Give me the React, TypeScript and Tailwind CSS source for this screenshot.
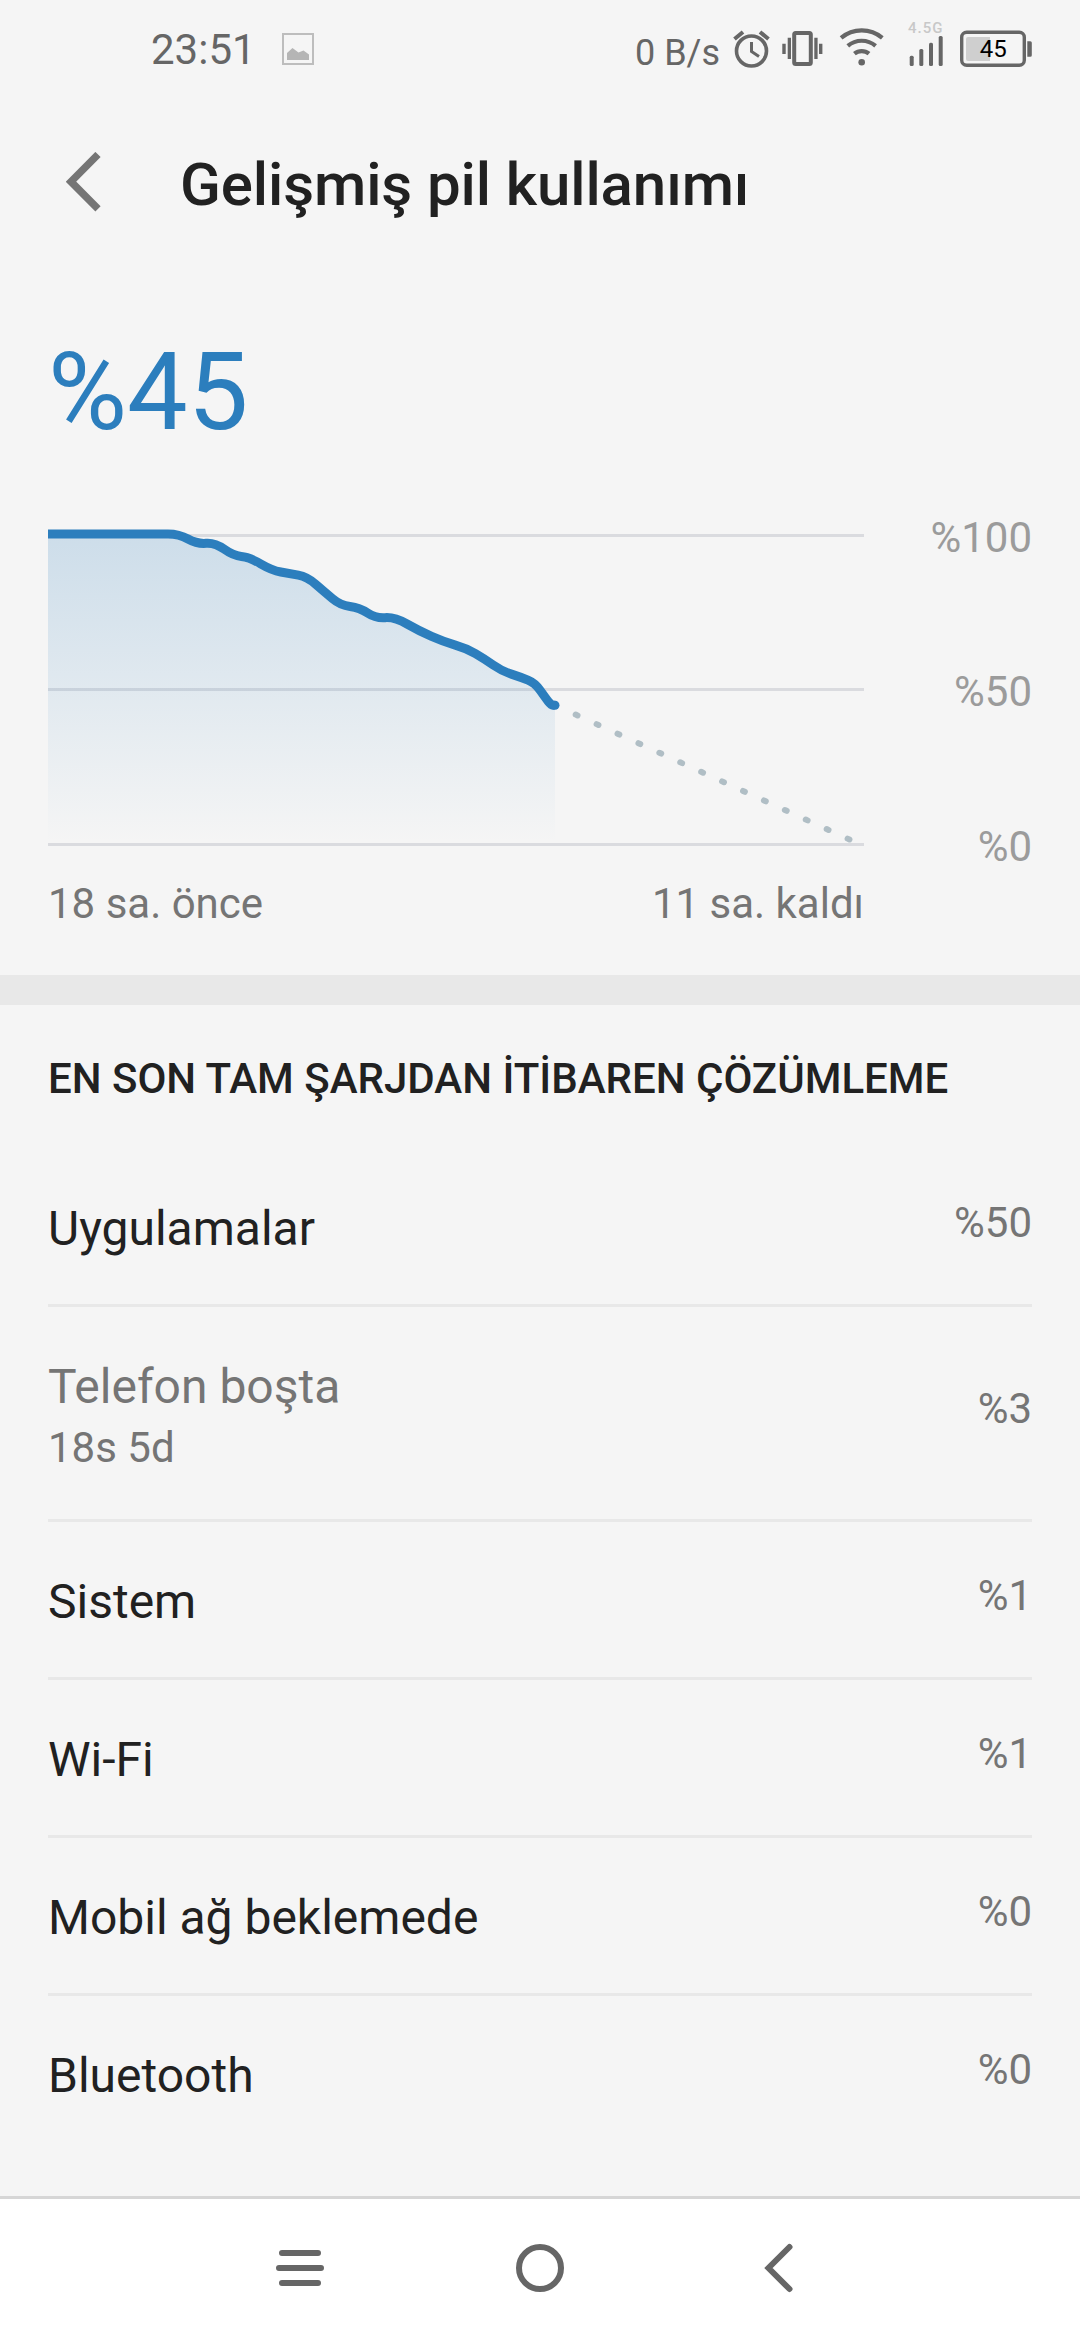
import type { ReactNode } from "react";

type Point = [number, number];

// Battery level history in chart pixels, the curve rounds off every corner
const history: Point[] = [
  [0, 14],
  [131, 14],
  [149, 24],
  [167, 22.6],
  [185.4, 35.8],
  [201.2, 37.2],
  [224, 50.4],
  [241.6, 53.6],
  [259, 56.7],
  [276.6, 71.9],
  [292.4, 85.3],
  [311.7, 87.7],
  [327.5, 98.3],
  [346.8, 97],
  [371.3, 111],
  [395.9, 121.8],
  [418.7, 128.5],
  [436.2, 138.7],
  [453.8, 151],
  [473, 157.3],
  [487, 163],
  [497.6, 178],
  [503, 185],
  [507, 185.3],
];

const rows = [
  { label: "Uygulamalar", value: "%50" },
  { label: "Telefon boşta", detail: "18s 5d", value: "%3" },
  { label: "Sistem", value: "%1" },
  { label: "Wi-Fi", value: "%1" },
  { label: "Mobil ağ beklemede", value: "%0" },
  { label: "Bluetooth", value: "%0" },
];

function smoothPath(points: Point[]) {
  const last = points[points.length - 1];
  let d = `M${points[0][0]} ${points[0][1]} H120`;
  for (let i = 1; i < points.length - 1; i++) {
    const [x, y] = points[i];
    const [nx, ny] = points[i + 1];
    d += ` Q${x} ${y} ${(x + nx) / 2} ${(y + ny) / 2}`;
  }
  return `${d} L${last[0]} ${last[1]}`;
}

function StatusBar() {
  return (
    <div className="flex h-[102px] shrink-0 items-start pl-[151px] text-[#666666]">
      <span className="w-[131px] pt-[26px] text-[42px] leading-[48px]">23:51</span>
      <svg className="mt-[33px]" width="32" height="32" viewBox="0 0 32 32">
        <rect x="1" y="1" width="30" height="30" fill="none" stroke="#bdbdbd" strokeWidth="2" />
        <path d="M5 27V20l5.500-5 6 4.500 5-2 5.500 4v5.500z" fill="#b5b5b5" />
      </svg>
      <span className="ml-auto pt-[32px] text-[36px] leading-[42px]">0 B/s</span>
      <svg className="ml-2.5 shrink-0" width="350" height="80" viewBox="730 0 350 80" fill="none">
        {/* alarm */}
        <g stroke="#666666" strokeWidth="3.600">
          <circle cx="751.500" cy="51" r="15" />
          <path d="M751.500 42v9.500l7.500 5" strokeWidth="3" />
          <path d="M734.500 39l8.500-7M768.500 39l-8.500-7" strokeWidth="4" />
        </g>
        {/* vibrate */}
        <rect x="794.200" y="33" width="16.600" height="31" rx="1.500" stroke="#666666" strokeWidth="4" />
        <path
          d="M787.700 37.700h3.300v21.300h-3.300zM782.300 43.700h3.400v10.300h-3.400zM814.300 37.700h3.300v21.300h-3.300zM819 43.700h3.400v10.300h-3.400z"
          fill="#666666"
        />
        {/* wifi */}
        <g stroke="#666666" strokeWidth="4.200">
          <path d="M841.100 37.800a32 32 0 0 1 41.200 0" />
          <path d="M847.800 45.800a21.600 21.600 0 0 1 27.800 0" />
          <path d="M854.400 53.700a11.300 11.300 0 0 1 14.600 0" />
        </g>
        <circle cx="861.700" cy="62.300" r="3.300" fill="#666666" />
        {/* mobile signal */}
        <text x="908" y="33" fontSize="15" fontWeight="500" letterSpacing="1" fill="#c8c8c8">
          4.5G
        </text>
        <g fill="#666666">
          <rect x="909.700" y="55.700" width="4" height="10.300" rx="1.500" />
          <rect x="919.300" y="49" width="4" height="17" rx="1.500" />
          <rect x="929" y="42.700" width="4" height="23.300" rx="1.500" />
          <rect x="938.700" y="36" width="4" height="30" rx="1.500" />
        </g>
        {/* battery */}
        <rect x="961.700" y="32.300" width="62.600" height="33" rx="5" stroke="#666666" strokeWidth="3.400" />
        <path d="M990 37h-22a2 2 0 0 0-2 2v20a2 2 0 0 0 2 2h22z" fill="#cfcfcf" />
        <path d="M1027.300 41.300h3a1.500 1.500 0 0 1 1.500 1.500v12.500a1.500 1.500 0 0 1-1.500 1.500h-3z" fill="#666666" />
        <text x="993.300" y="57" fontSize="24" textAnchor="middle" fill="#000000">
          45
        </text>
      </svg>
    </div>
  );
}

function Header() {
  return (
    <header className="flex h-[160px] shrink-0 items-start pl-[66px]">
      <svg className="mt-[50px] shrink-0" width="35" height="60" viewBox="0 0 35 60" fill="none">
        <path d="M32 2.500L5 29.700 32 56.800" stroke="#757575" strokeWidth="7.400" />
      </svg>
      <h1 className="ml-[79px] pt-[47px] text-[60px] font-medium leading-[72px] tracking-[-0.1px] text-[#212121]">
        Gelişmiş pil kullanımı
      </h1>
    </header>
  );
}

function Chart() {
  const line = smoothPath(history);
  return (
    <div className="flex h-[346px] justify-between">
      <svg width="820" height="346" viewBox="0 0 820 346" fill="none">
        <defs>
          <linearGradient id="level" x1="0" y1="14" x2="0" y2="323" gradientUnits="userSpaceOnUse">
            <stop offset="0" stopColor="#2c7ebd" stopOpacity="0.200" />
            <stop offset="0.500" stopColor="#2c7ebd" stopOpacity="0.100" />
            <stop offset="1" stopColor="#2c7ebd" stopOpacity="0" />
          </linearGradient>
        </defs>
        <path d="M0 14h816v3H0zM0 168h816v3H0zM0 323h816v3H0z" fill="#dadbdf" />
        <path d={`${line} V323 H0 Z`} fill="url(#level)" />
        <path d={line} stroke="#2c7ebd" strokeWidth="9" strokeLinejoin="round" />
        <circle cx="507" cy="185.300" r="4.500" fill="#2c7ebd" />
        <path
          d="M527.700 194.600L801.500 319.500"
          stroke="#b0bec5"
          strokeWidth="6"
          strokeLinecap="round"
          strokeDasharray="2 20.990"
        />
      </svg>
      <div className="-mt-1.5 flex flex-col items-end text-[42px] leading-[48px] text-[#9b9b9b]">
        <span className="h-[154px] shrink-0">%100</span>
        <span className="h-[155px] shrink-0">%50</span>
        <span className="shrink-0">%0</span>
      </div>
    </div>
  );
}

function Row({ label, detail, value, last }: { label: string; detail?: string; value: string; last: boolean }) {
  return (
    <li
      className={
        "flex items-start justify-between " +
        (detail ? "h-[215px] " : "h-[158px] ") +
        (last ? "" : "border-b-[3px] border-[#e8e8e8]")
      }
    >
      <div className={detail ? "pt-[52px] text-[#757575]" : "pt-[52px] text-[#212121]"}>
        <p className="text-[48px] leading-[56px]">{label}</p>
        {detail && <p className="pt-[9px] text-[42px] leading-[48px]">{detail}</p>}
      </div>
      <span className={(detail ? "pt-[78px] " : "pt-[50px] ") + "text-[42px] leading-[48px] text-[#757575]"}>
        {value}
      </span>
    </li>
  );
}

function NavButton({ children }: { children: ReactNode }) {
  return (
    <button className="flex h-[60px] w-[60px] items-center justify-center">
      <svg width="60" height="60" viewBox="0 0 60 60" fill="none" stroke="#666666" strokeWidth="6" strokeLinecap="round">
        {children}
      </svg>
    </button>
  );
}

export default function App() {
  return (
    <div className="flex h-[2340px] w-[1080px] flex-col overflow-hidden bg-[#f5f5f5] font-['Roboto',sans-serif]">
      <StatusBar />
      <Header />
      <section className="flex h-[713px] shrink-0 flex-col px-12">
        <p className="h-[258px] pt-[67px] text-[108px] leading-[126px] text-[#2c7ebd]">%45</p>
        <Chart />
        <div className="mt-[14px] flex w-[816px] justify-between text-[42px] leading-[48px] text-[#757575]">
          <span>18 sa. önce</span>
          <span>11 sa. kaldı</span>
        </div>
      </section>
      <div className="h-[30px] shrink-0 bg-[#e8e8e8]" />
      <section className="grow px-12">
        <h2 className="h-[144px] pt-[50px] text-[42px] font-medium leading-[48px] text-[#212121]">
          EN SON TAM ŞARJDAN İTİBAREN ÇÖZÜMLEME
        </h2>
        <ul>
          {rows.map((row, i) => (
            <Row key={row.label} {...row} last={i === rows.length - 1} />
          ))}
        </ul>
      </section>
      <nav className="flex h-[144px] shrink-0 items-start justify-center gap-[180px] border-t-[3px] border-[#d6d6d6] bg-white pt-[39px]">
        <NavButton>
          <path d="M12 15h36M9 30h42M12 45h36" />
        </NavButton>
        <NavButton>
          <circle cx="30" cy="30" r="21" />
        </NavButton>
        <NavButton>
          <path d="M39.500 9L18.500 30l21 21" />
        </NavButton>
      </nav>
    </div>
  );
}
